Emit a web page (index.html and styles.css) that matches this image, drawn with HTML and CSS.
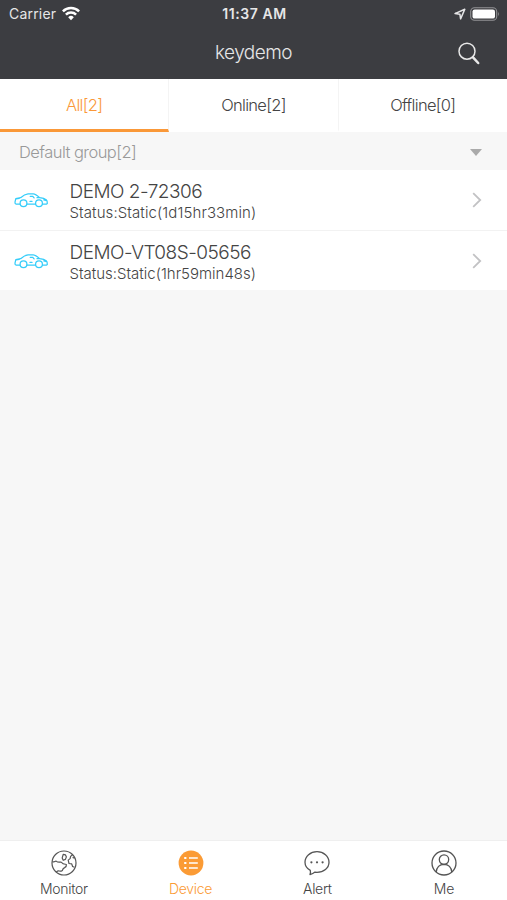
FILE: index.html
```html
<!DOCTYPE html>
<html lang="en">
<head>
<meta charset="utf-8">
<title>keydemo</title>
<link rel="stylesheet" href="styles.css">
</head>
<body>
<header class="header">
  <div class="status">
    <div class="carrier"><span>Carrier</span>
      <svg width="18" height="15" viewBox="0 0 18 15"><g fill="none" stroke="#fff" stroke-width="2.5"><path d="M.9 5.3a11.5 11.5 0 0 1 16.2 0"/><path d="M3.9 8.6a7.2 7.2 0 0 1 10.2 0"/></g><path fill="#fff" d="M6.2 11.2a4 4 0 0 1 5.6 0L9 14.2z"/></svg>
    </div>
    <span class="time">11:37 AM</span>
    <div class="power">
      <svg width="12" height="12" viewBox="0 0 12 12"><path d="M1 5.6 10.8 1.2 6.6 10.9 5.9 6.2z" fill="none" stroke="#e6e6e7" stroke-width="1.5" stroke-linejoin="round"/></svg>
      <svg width="30" height="14" viewBox="0 0 30 14"><rect x=".7" y=".7" width="26" height="12.6" rx="3.8" fill="none" stroke="#929295" stroke-width="1.1"/><rect x="2.5" y="2.4" width="22.5" height="9.2" rx="2.2" fill="#fff"/><path d="M28.2 4.8q1.8 2.2 0 4.4z" fill="#929295"/></svg>
    </div>
  </div>
  <div class="titlebar">
    <h1>keydemo</h1>
    <svg class="search" width="22" height="23" viewBox="0 0 22 23" fill="none" stroke="#e8e8e8"><circle cx="9" cy="9.2" r="8" stroke-width="1.5"/><path d="m15 15.3 5.2 5.7" stroke-width="2.5" stroke-linecap="round"/></svg>
  </div>
</header>
<nav class="tabs">
  <a class="tab active">All[2]</a>
  <a class="tab">Online[2]</a>
  <a class="tab">Offline[0]</a>
</nav>
<section class="group"><span>Default group[2]</span><i class="caret"></i></section>
<svg class="defs" width="0" height="0"><symbol id="car" viewBox="0 0 34 15"><g fill="none" stroke="#35cdfa" stroke-width="1.25" stroke-linejoin="round" stroke-linecap="round"><circle cx="9.5" cy="10.3" r="3.4"/><circle cx="25" cy="10.3" r="3.4"/><path d="M6 11.2H2.2Q.8 11 1 9.2l.8-3.6 4.8-.9Q10.6 1.2 14 .9h5.2q2.4.2 6.4 3.7 4.6.3 6.9 2.4.8.8.8 3.4l-1 .8h-3.8M13 11.2h8.5M2 5.8l3.3-.4M26 4.7h-3M29.8 6.8l2 .7M16.2 3.3h2.6l1.3 1.6M16 8.4h2"/></g></symbol></svg>
<main class="list">
  <a class="row">
    <svg class="car" width="34" height="15"><use href="#car"/></svg>
    <div class="info"><h2>DEMO 2-72306</h2><p class="long">Status:Static(1d15hr33min)</p></div>
    <svg class="chev" width="10" height="16" viewBox="0 0 10 16"><path d="m1.2 1.2 7 6.8-7 6.8" fill="none" stroke="#c2c2c4" stroke-width="1.8"/></svg>
  </a>
  <a class="row">
    <svg class="car" width="34" height="15"><use href="#car"/></svg>
    <div class="info"><h2>DEMO-VT08S-05656</h2><p>Status:Static(1hr59min48s)</p></div>
    <svg class="chev" width="10" height="16" viewBox="0 0 10 16"><path d="m1.2 1.2 7 6.8-7 6.8" fill="none" stroke="#c2c2c4" stroke-width="1.8"/></svg>
  </a>
</main>
<footer class="bottom">
  <a class="item"><svg width="26" height="26" viewBox="0 0 26 26" fill="none" stroke="#555" stroke-width="1.2" stroke-linejoin="round"><circle cx="13" cy="13" r="12"/><path d="M1.3 11.6q2.2.6 3.8-.5 1.8 1.6 4.9.9 1.5 2.3 5.4 2.5.3 2.1-1.8 3.1-1.8.8-2.2 2.8-1.9 1.3-4.2.4l-2 1.2M12.2 4.3l2.2.5 1 2.1-1 2.5-2.2.9-1-2.4zM21.5 4.7l-1.9 1.7-.5 2.2-1.9 1.5.8 3.4 2.7.4.9 2.6 1.8.8M21.6 7.4l2 .8"/></svg><span>Monitor</span></a>
  <a class="item on"><svg width="26" height="26" viewBox="0 0 26 26"><circle cx="13" cy="13" r="12.4" fill="#fb9b35"/><g stroke="#fff" stroke-width="1.3"><path d="M6.2 8h2.2M6.2 13h2.2M6.2 18h2.2" stroke-width="2"/><path d="M11 8h8.8M11 13h8.8M11 18h8.8"/></g></svg><span>Device</span></a>
  <a class="item"><svg width="26" height="26" viewBox="0 0 26 26"><path d="M6.3 20.4C3 18.5 1 15.7 1 12.2 1 6.3 6.4 1.6 13 1.6S25 6.3 25 12.2 19.6 22.3 13 22.3L11 22.1Q9 23.8 6 24.6 6.8 22.6 6.3 20.4z" fill="none" stroke="#555" stroke-width="1.3" stroke-linejoin="round"/><g fill="#555"><circle cx="7.4" cy="12.3" r="1.1"/><circle cx="13" cy="12.3" r="1.1"/><circle cx="18.6" cy="12.3" r="1.1"/></g></svg><span>Alert</span></a>
  <a class="item"><svg width="26" height="26" viewBox="0 0 26 26" fill="none" stroke="#555" stroke-width="1.3"><circle cx="13" cy="13" r="12"/><circle cx="13" cy="9.6" r="4.7"/><path d="M5.2 22.1q.8-7.7 7.8-7.8 7 .1 7.8 7.8"/></svg><span class="me">Me</span></a>
</footer>
</body>
</html>
```

FILE: styles.css
```css
* { box-sizing: border-box; }
body { margin: 0; height: 900px; display: flex; flex-direction: column; overflow: hidden; background: #f7f7f7; color: #444; font-family: Inter, "Liberation Sans", sans-serif; font-weight: 300; }
h1, h2, p { margin: 0; font-weight: 300; white-space: nowrap; }
svg { display: block; flex: none; }
span { white-space: nowrap; }
.defs { display: none; }
.header { height: 79px; background: #3c3d41; color: #e6e6e7; }
.status { height: 27px; display: grid; grid-template-columns: 1fr auto 1fr; align-items: center; padding: 0 7px 0 9px; }
.carrier { display: flex; align-items: center; gap: 6px; font-size: 14px; font-weight: 400; letter-spacing: .2px; }
.time { font-size: 14px; font-weight: 600; letter-spacing: .6px; }
.power { display: flex; justify-content: flex-end; align-items: center; gap: 4px; }
.titlebar { height: 52px; display: grid; grid-template-columns: 1fr auto 1fr; align-items: center; padding: 0 27px; }
.titlebar h1 { grid-column: 2; font-size: 19px; line-height: 24px; letter-spacing: -.5px; }
.search { justify-self: end; }
.tabs { height: 53px; display: flex; background: #fff; }
.tab { flex: 1; display: flex; justify-content: center; align-items: center; border-bottom: 3px solid #fff; border-right: 1px solid #f4f4f4; font-size: 16.5px; letter-spacing: -.7px; padding-top: 2px; }
.tab:last-child { border-right: 0; }
.tab.active { color: #fa9838; border-bottom-color: #fa9838; }
.group { height: 38px; display: flex; align-items: center; justify-content: space-between; padding: 2px 25px 0 19px; color: #999; font-size: 16.5px; letter-spacing: -.55px; }
.caret { border: 6px solid transparent; border-top: 7px solid #aaa; border-bottom: 0; }
.row { height: 60px; display: flex; align-items: center; background: #fff; padding: 0 25px 0 14px; }
.row + .row { border-top: 1px solid #f2f2f2; padding-top: 1px; }
.info { flex: 1; margin-left: 21.5px; padding-top: 2px; }
h2 { font-size: 19px; line-height: 23px; letter-spacing: -.5px; }
.info p { font-size: 15px; line-height: 19px; }
.info .long { letter-spacing: .1px; }
.bottom { margin-top: auto; height: 60px; display: flex; background: #fff; border-top: 1px solid #efefef; }
.item { flex: 1; display: flex; flex-direction: column; align-items: center; padding: 9px 0 0 1px; font-size: 14px; line-height: 18px; letter-spacing: -.3px; }
.item span { margin-top: 4px; }
.item .me { letter-spacing: 0; }
.on { color: #fb9b35; }
```
